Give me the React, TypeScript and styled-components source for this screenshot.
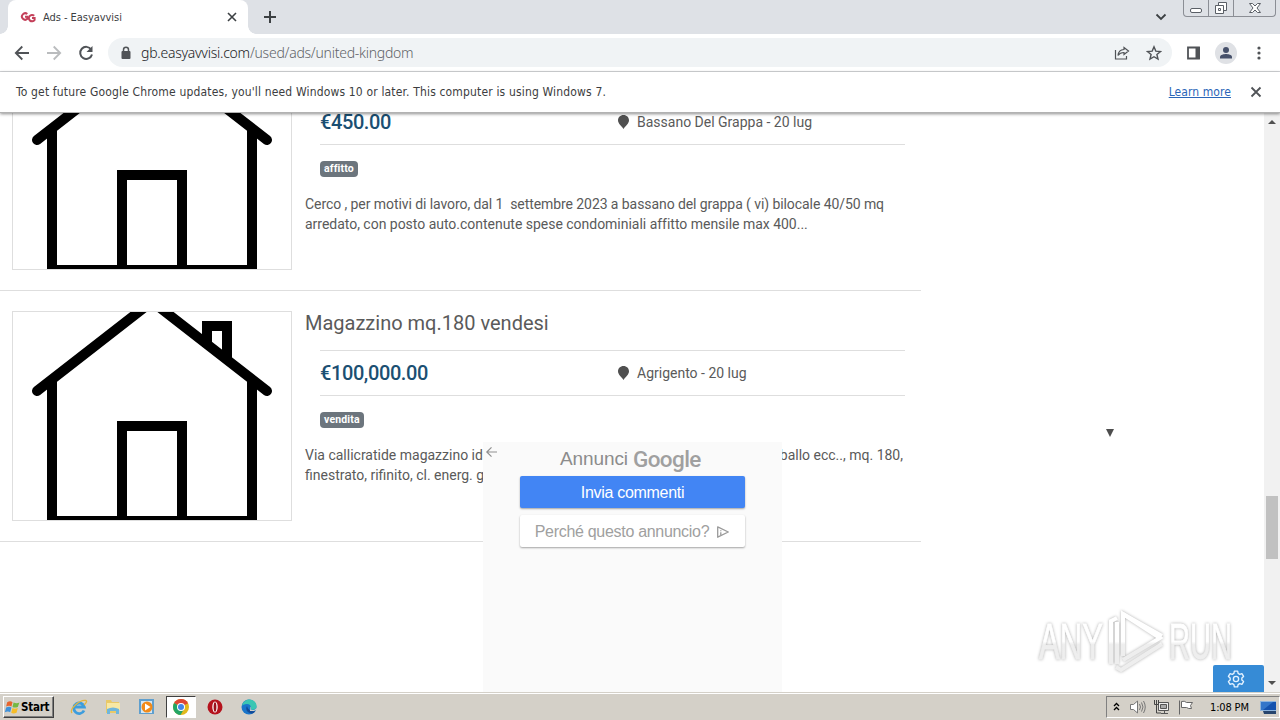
import type { ReactNode } from "react";
import styled, { createGlobalStyle } from "styled-components";

const GlobalStyle = createGlobalStyle`
  * {
    box-sizing: border-box;
  }
  body {
    margin: 0;
    overflow: hidden;
    background: #fff;
  }
  svg {
    display: block;
    flex: none;
  }
`;

const Screen = styled.div`
  width: 1280px;
  height: 720px;
  display: flex;
  flex-direction: column;
  overflow: hidden;
  font-family: "DejaVu Sans Condensed", "DejaVu Sans", sans-serif;
  font-stretch: condensed;
`;

/* Browser chrome */

const TabStrip = styled.div`
  height: 34px;
  flex: none;
  display: flex;
  align-items: flex-start;
  padding-left: 8px;
  background: #dee1e6;
`;

const Tab = styled.div`
  position: relative;
  width: 240px;
  height: 34px;
  display: flex;
  align-items: center;
  padding: 0 10px 0 12px;
  background: #fff;
  border-radius: 8px 8px 0 0;
  &::before,
  &::after {
    content: "";
    position: absolute;
    bottom: 0;
    width: 8px;
    height: 8px;
  }
  &::before {
    left: -8px;
    background: radial-gradient(circle at 0 0, #dee1e6 7.5px, #fff 8px);
  }
  &::after {
    right: -8px;
    background: radial-gradient(circle at 100% 0, #dee1e6 7.5px, #fff 8px);
  }
`;

const TabTitle = styled.span`
  flex: 1;
  margin-left: 7px;
  font-size: 11px;
  letter-spacing: -0.05px;
  color: #3c4043;
`;

const NewTab = styled.div`
  margin: 11px 0 0 16px;
`;

const TabSearch = styled.div`
  margin: 13px 16px 0 auto;
`;

const WindowButtons = styled.div`
  display: flex;
  width: 93px;
  height: 17px;
  margin-right: 4px;
  border: 1px solid #8b8e95;
  border-top: 0;
  border-radius: 0 0 4px 4px;
`;

const WindowButton = styled.div<{ $width: number }>`
  width: ${({ $width }) => $width}px;
  display: flex;
  justify-content: center;
  border-right: 1px solid #8b8e95;
  &:last-child {
    border-right: 0;
  }
`;

const Toolbar = styled.div`
  height: 38px;
  flex: none;
  display: flex;
  align-items: center;
  padding: 0 13px 0 14px;
  background: #fff;
  border-bottom: 1px solid #d5d7da;
`;

const NavIcons = styled.div`
  display: flex;
  gap: 16px;
  width: 94px;
`;

const Omnibox = styled.div`
  width: 1064px;
  height: 29px;
  display: flex;
  align-items: center;
  padding: 0 10px 0 12px;
  border-radius: 15px;
  background: #f0f3f5;
`;

const Url = styled.div`
  flex: 1;
  margin-left: 9px;
  font-family: "Noto Sans", sans-serif;
  font-size: 14px;
  font-weight: 300;
  letter-spacing: -0.25px;
  color: #5f6368;
  white-space: nowrap;
`;

const Host = styled.span`
  color: #202124;
`;

const OmniboxIcons = styled.div`
  display: flex;
  gap: 16px;
`;

const ToolbarActions = styled.div`
  display: flex;
  align-items: center;
  gap: 14px;
  margin-left: 14px;
`;

const Avatar = styled.div`
  width: 22px;
  height: 22px;
  display: grid;
  place-items: center;
  border-radius: 50%;
  background: #dfe1e5;
`;

const InfoBar = styled.div`
  position: relative;
  z-index: 1;
  height: 41px;
  flex: none;
  display: flex;
  align-items: center;
  padding: 0 18px 1px 16px;
  background: #fff;
  border-bottom: 1px solid #b2b2b2;
  box-shadow: 0 1px 3px rgba(0, 0, 0, 0.45);
  font-size: 12px;
  color: #3c3d40;
`;

const InfoText = styled.span`
  flex: 1;
  letter-spacing: 0.16px;
  white-space: nowrap;
`;

const InfoLink = styled.span`
  margin-right: 19px;
  color: #2a65b8;
  text-decoration: underline;
  letter-spacing: 0.08px;
`;

/* Page */

const Viewport = styled.div`
  flex: 1;
  min-height: 0;
  display: flex;
`;

const Page = styled.main`
  position: relative;
  width: 1264px;
  overflow: hidden;
  font-family: Roboto, sans-serif;
  font-stretch: normal;
  color: #5a5a5a;
`;

const AdList = styled.div`
  width: 921px;
  margin-top: -73px;
`;

const AdRow = styled.article`
  height: 251px;
  display: flex;
  gap: 13px;
  padding: 20px 0 20px 12px;
  border-bottom: 1px solid #dedede;
`;

const Thumb = styled.div`
  width: 280px;
  height: 210px;
  border: 1px solid #dedede;
  overflow: hidden;
`;

const AdInfo = styled.div`
  flex: 1;
  min-width: 0;
`;

const AdTitle = styled.h2`
  height: 39px;
  margin: 0;
  font-size: 20px;
  font-weight: 400;
  line-height: 24px;
`;

const AdMeta = styled.div`
  display: grid;
  grid-template-columns: 297px 1fr;
  align-items: center;
  height: 46px;
  margin: 0 16px 0 15px;
  border-top: 1px solid #dedede;
  border-bottom: 1px solid #dedede;
`;

const Price = styled.span`
  font-size: 20px;
  font-weight: 500;
  letter-spacing: -0.4px;
  color: #1b4f72;
`;

const Place = styled.span`
  display: flex;
  align-items: center;
  gap: 7px;
  font-size: 14px;
`;

const Tag = styled.span`
  display: block;
  width: fit-content;
  height: 16px;
  margin: 16px 0 17px 15px;
  padding: 0 4px;
  border-radius: 4px;
  background: #6c757d;
  color: #fff;
  font-size: 10.5px;
  font-weight: 700;
  line-height: 16px;
  letter-spacing: 0.14px;
`;

const AdText = styled.p`
  margin: 0;
  font-size: 14px;
  line-height: 20px;
  white-space: pre;
`;

const TextLine = styled.span<{ $spacing?: number }>`
  display: flex;
  justify-content: space-between;
  padding-right: 18px;
  letter-spacing: ${({ $spacing = 0 }) => $spacing}px;
`;

const Banner = styled.aside`
  position: absolute;
  left: 483px;
  top: 329px;
  width: 299px;
  height: 250px;
  display: flex;
  flex-direction: column;
  align-items: center;
  background: #fafafa;
  font-family: "Liberation Sans", Arial, sans-serif;
`;

const BannerBack = styled.div`
  position: absolute;
  left: 2px;
  top: 4px;
`;

const BannerHead = styled.div`
  width: 145px;
  height: 34px;
  display: flex;
  align-items: center;
  gap: 5px;
  font-size: 19px;
  letter-spacing: -0.1px;
  color: #8c8c8c;
  white-space: nowrap;
`;

const GoogleWord = styled.span`
  font-family: Roboto, sans-serif;
  font-size: 22.5px;
  font-weight: 500;
  letter-spacing: -0.6px;
  line-height: 30px;
  color: #a0a0a0;
`;

const BannerButton = styled.div<{ $primary?: boolean }>`
  width: 225px;
  height: 32px;
  display: flex;
  align-items: center;
  justify-content: center;
  gap: 7px;
  margin-bottom: 7px;
  padding-top: 1px;
  border-radius: 2px;
  background: ${({ $primary }) => ($primary ? "#4285f4" : "#fff")};
  color: ${({ $primary }) => ($primary ? "#fff" : "#a0a0a0")};
  box-shadow: 0 1px 2px rgba(0, 0, 0, 0.35);
  font-size: 16px;
  letter-spacing: -0.3px;
`;

const Caret = styled.div`
  position: absolute;
  left: 1106px;
  top: 316px;
  border: solid transparent;
  border-width: 8px 4.5px 0;
  border-top-color: #4d4d4d;
`;

const Watermark = styled.div`
  position: absolute;
  left: 1030px;
  top: 490px;
  filter: drop-shadow(0 0 1.5px rgba(0, 0, 0, 0.32));
`;

const SettingsTab = styled.div`
  position: absolute;
  left: 1213px;
  bottom: 0;
  width: 51px;
  height: 27px;
  display: grid;
  place-items: center;
  padding-right: 5px;
  background: #368bd6;
  border-radius: 2px 2px 0 0;
`;

const ScrollTrack = styled.div`
  width: 16px;
  display: flex;
  flex-direction: column;
  align-items: center;
  padding: 7px 0;
  background: #f1f1f1;
`;

const ScrollThumb = styled.div`
  width: 12px;
  height: 63px;
  margin: 372px 0 auto;
  background: #c1c1c1;
`;

const ScrollArrow = styled.div<{ $up?: boolean }>`
  border: solid transparent;
  border-width: ${({ $up }) => ($up ? "0 4px 4px" : "4px 4px 0")};
  border-bottom-color: ${({ $up }) => ($up ? "#505050" : "transparent")};
  border-top-color: ${({ $up }) => ($up ? "transparent" : "#505050")};
`;

/* Taskbar */

const Taskbar = styled.footer`
  position: relative;
  z-index: 1;
  height: 28px;
  flex: none;
  display: flex;
  align-items: center;
  padding: 1px 0 0 3px;
  background: #d4d0c8;
  border-top: 1px solid #d4d0c8;
  box-shadow: inset 0 1px #fff;
`;

const StartButton = styled.div`
  width: 51px;
  height: 22px;
  display: flex;
  align-items: center;
  border: 1px solid;
  border-color: #fff #404040 #404040 #fff;
  box-shadow: inset -1px -1px #808080;
  font-size: 11.5px;
  font-weight: 700;
  letter-spacing: -0.25px;
`;

const QuickLaunch = styled.div`
  display: flex;
  gap: 4px;
  margin-left: 10px;
`;

const LaunchItem = styled.div<{ $active?: boolean }>`
  width: 30px;
  height: 22px;
  display: grid;
  place-items: center;
  border: 1px solid;
  border-color: ${({ $active }) =>
    $active ? "#404040 #fff #fff #404040" : "transparent"};
  background: ${({ $active }) => ($active ? "#fff" : "transparent")};
`;

const Tray = styled.div`
  width: 174px;
  height: 22px;
  display: flex;
  align-items: center;
  margin-left: auto;
  padding-left: 6px;
  border: 1px solid;
  border-color: #808080 #fff #fff #808080;
`;

const TrayIcon = styled.div<{ $gap: number }>`
  margin-right: ${({ $gap }) => $gap}px;
`;

const Clock = styled.span`
  width: 49px;
  font-size: 11px;
  letter-spacing: -0.15px;
  color: #000;
  white-space: nowrap;
`;

interface IconProps {
  w: number;
  h?: number;
  box?: string;
  color?: string;
  stroke?: number;
  children: ReactNode;
}

function Icon({ w, h = w, box, color = "#505357", stroke = 1.5, children }: IconProps) {
  return (
    <svg
      width={w}
      height={h}
      viewBox={box ?? `0 0 ${w} ${h}`}
      fill="none"
      stroke={color}
      strokeWidth={stroke}
    >
      {children}
    </svg>
  );
}

function House() {
  return (
    <Icon w={278} h={208} box="13 312 278 208" color="#000" stroke={10}>
      <path d="M37 391 152 301.5 267 391" strokeLinecap="round" />
      <path d="M52 380V521H252V380M122 521V426H182V521M207 347V326H227V360" />
    </Icon>
  );
}

function Pin() {
  return (
    <Icon w={13} h={16} stroke={0}>
      <path d="M6.5 1C3.3 1 1 3.3 1 6.3 1 9.7 4.5 12 6.5 15 8.5 12 12 9.7 12 6.3 12 3.3 9.7 1 6.5 1Z" fill="#505050" />
    </Icon>
  );
}

interface AdProps {
  title: string;
  price: string;
  place: string;
  tag: string;
  children: ReactNode;
}

function Ad({ title, price, place, tag, children }: AdProps) {
  return (
    <AdRow>
      <Thumb>
        <House />
      </Thumb>
      <AdInfo>
        <AdTitle>{title}</AdTitle>
        <AdMeta>
          <Price>{price}</Price>
          <Place>
            <Pin />
            {place}
          </Place>
        </AdMeta>
        <Tag>{tag}</Tag>
        <AdText>{children}</AdText>
      </AdInfo>
    </AdRow>
  );
}

function BrowserTop() {
  return (
    <>
      <TabStrip>
        <Tab>
          <Icon w={16} color="#c4405a" stroke={2}>
            <path d="M7.3 5.1A3.2 3.2 0 1 0 7.4 9.8V7.7H5" />
            <path d="M14.2 6.8A3.2 3.2 0 1 0 14.6 11V9H12" />
          </Icon>
          <TabTitle>Ads - Easyavvisi</TabTitle>
          <Icon w={12} color="#3c4043" stroke={1.6}>
            <path d="m2 2 8 8M10 2 2 10" />
          </Icon>
        </Tab>
        <NewTab>
          <Icon w={12} color="#3c4043" stroke={2}>
            <path d="M6 0v12M0 6h12" />
          </Icon>
        </NewTab>
        <TabSearch>
          <Icon w={12} h={8} color="#3c4043" stroke={1.8}>
            <path d="m1.5 1.5 4.5 4.5 4.5-4.5" />
          </Icon>
        </TabSearch>
        <WindowButtons>
          <WindowButton $width={25}>
            <Icon w={13} h={16} color="#5a5f66" stroke={1}>
              <rect x="0.5" y="8.5" width="11" height="4" rx="1.5" fill="#fff" />
            </Icon>
          </WindowButton>
          <WindowButton $width={25}>
            <Icon w={14} h={16} color="#5a5f66" stroke={1}>
              <path d="M4.5 2.5h8v8h-8z" fill="#fff" />
              <path d="M1.5 5.5h8v8h-8z" fill="#fff" />
              <path d="M4.5 8.5h2v2h-2z" />
            </Icon>
          </WindowButton>
          <WindowButton $width={41}>
            <Icon w={14} h={16} color="#5a5f66" stroke={1}>
              <path d="M1.5 3.5h3L7 6l2.5-2.5h3L9 8l3.5 4.5h-3L7 10l-2.5 2.5h-3L5 8z" fill="#fff" />
            </Icon>
          </WindowButton>
        </WindowButtons>
      </TabStrip>
      <Toolbar>
        <NavIcons>
          <Icon w={16} stroke={1.8}>
            <path d="M15 8H2M8.3 1.5 1.8 8l6.5 6.5" />
          </Icon>
          <Icon w={16} color="#babcbe" stroke={1.8}>
            <path d="M1 8h13M7.7 1.5 14.2 8l-6.5 6.5" />
          </Icon>
          <Icon w={16} stroke={2}>
            <path d="M13.2 4.5A6 6 0 1 0 14 9.5" />
            <path d="M14.5 1v6h-6z" fill="#505357" stroke="none" />
          </Icon>
        </NavIcons>
        <Omnibox>
          <Icon w={12} h={14}>
            <rect x="1.5" y="5" width="9" height="8" rx="1" fill="#505357" stroke="none" />
            <path d="M3.5 6V3.8a2.5 2.5 0 0 1 5 0V6" />
          </Icon>
          <Url>
            <Host>gb.easyavvisi.com</Host>/used/ads/united-kingdom
          </Url>
          <OmniboxIcons>
            <Icon w={16} stroke={1.2}>
              <path d="M1.5 5v9h11v-3" />
              <path d="M10 2.5 14.5 6 10 9.5v-2C7 7.5 5.3 8.5 4 10.5 4.3 7 6.5 4.7 10 4.5z" />
            </Icon>
            <Icon w={16} stroke={1.4}>
              <path d="m8 1.8 1.8 4.3 4.7.4-3.6 3 1.1 4.6L8 11.7l-4 2.4 1.1-4.6-3.6-3 4.7-.4z" />
            </Icon>
          </OmniboxIcons>
        </Omnibox>
        <ToolbarActions>
          <Icon w={15} h={14}>
            <path d="M2 1.5h11v11H2z" stroke="#505357" strokeWidth="1.8" />
            <path d="M9.5 1H14v12H9.5z" fill="#505357" stroke="none" />
          </Icon>
          <Avatar>
            <Icon w={14} color="none">
              <circle cx="7" cy="4" r="3" fill="#46506a" />
              <path d="M1 12.5V11c0-2.2 4-3 6-3s6 .8 6 3v1.5z" fill="#46506a" />
            </Icon>
          </Avatar>
          <Icon w={16} color="none">
            <g fill="#505357">
              <circle cx="8" cy="3" r="1.6" />
              <circle cx="8" cy="8" r="1.6" />
              <circle cx="8" cy="13" r="1.6" />
            </g>
          </Icon>
        </ToolbarActions>
      </Toolbar>
      <InfoBar>
        <InfoText>
          To get future Google Chrome updates, you'll need Windows 10 or later. This computer is using Windows 7.
        </InfoText>
        <InfoLink>Learn more</InfoLink>
        <Icon w={12} stroke={1.8}>
          <path d="m1.5 1.5 9 9M10.5 1.5l-9 9" />
        </Icon>
      </InfoBar>
    </>
  );
}

function GoogleBanner() {
  return (
    <Banner>
      <BannerBack>
        <Icon w={13} h={12} color="#8f8f8f" stroke={1.2}>
          <path d="M12 6H2M6.5 1.3 1.8 6l4.7 4.7" />
        </Icon>
      </BannerBack>
      <BannerHead>
        Annunci <GoogleWord>Google</GoogleWord>
      </BannerHead>
      <BannerButton $primary>Invia commenti</BannerButton>
      <BannerButton>
        Perché questo annuncio?
        <Icon w={14} color="#9a9a9a" stroke={1.3}>
          <path d="M1.7 1.8 12.3 7 1.7 12.2z" strokeLinejoin="round" />
          <path d="M4.8 5.200v1M4.800 7.300V10" />
        </Icon>
      </BannerButton>
    </Banner>
  );
}

function AnyRun() {
  return (
    <Watermark>
      <svg width="210" height="80" viewBox="0 0 210 80">
        <defs>
          <linearGradient id="fade" x1="0" y1="0" x2="0" y2="80" gradientUnits="userSpaceOnUse">
            <stop offset="0.48" stopColor="#fff" />
            <stop offset="0.52" stopColor="#eee" />
          </linearGradient>
        </defs>
        <g
          fill="url(#fade)"
          stroke="url(#fade)"
          strokeWidth="0.8"
          fontFamily="'Liberation Sans Narrow', 'Liberation Sans', sans-serif"
          fontSize="50"
        >
          <text x="9" y="56" textLength="64" lengthAdjust="spacingAndGlyphs">ANY</text>
          <text x="139" y="56" textLength="63" lengthAdjust="spacingAndGlyphs">RUN</text>
        </g>
        <g fill="none" stroke="url(#fade)" strokeWidth="4">
          <path d="M93 53V11l37 24-37 22" />
          <path d="M93 11 132 33M81 61V18l6-3M87 19v42M86 64l5 3 41-26" />
        </g>
      </svg>
    </Watermark>
  );
}

function StartBar() {
  return (
    <Taskbar>
      <StartButton>
        <Icon w={17} h={17} box="0 0 16 16" color="none">
          <path d="M3 3q3-2 5 0L7 7Q5 5.5 2 7z" fill="#e8642c" />
          <path d="M9 3.3q3 1.5 5.5 0L13 7.5q-3 1-5 0z" fill="#75b843" />
          <path d="M2 8q3-1.5 5 0l-1.2 4.5q-2-1.5-5 0z" fill="#3f91d9" />
          <path d="M8 8.5q2 1.5 5 0L11.8 13q-3 1.5-5 0z" fill="#f6bd28" />
        </Icon>
        Start
      </StartButton>
      <QuickLaunch>
        <LaunchItem>
          <Icon w={18} color="#3d9ddd" stroke={2.8}>
            <path d="M14 12.5A5.3 5.3 0 1 1 14.3 9H5" />
            <path d="M2 15C-1 11 10 1 16 2.5 18 3.5 14 7 14 7" stroke="#e3b53e" strokeWidth="1.3" />
          </Icon>
        </LaunchItem>
        <LaunchItem>
          <Icon w={18} color="none">
            <path d="M2 2h5l1 2h7v11H2z" fill="#e9c968" />
            <path d="M3 5h13v7H3z" fill="#f8e8a4" />
            <path d="M3 16v-5q6-3 12 0v5h-3v-3H6v3z" fill="#6fb6dc" />
          </Icon>
        </LaunchItem>
        <LaunchItem>
          <Icon w={18} color="none">
            <path d="M1 1h15v15H1z" fill="#5f9fce" />
            <path d="M3 3h11v12H3z" fill="#d6e7f3" />
            <circle cx="9" cy="9" r="5.5" fill="#f28a18" />
            <path d="m7 5.5 5.5 3.5L7 12.5z" fill="#fff" />
          </Icon>
        </LaunchItem>
        <LaunchItem $active>
          <Icon w={16} color="none">
            <circle cx="8" cy="8" r="8" fill="#e2b91d" />
            <path d="M8 8 1.1 4A8 8 0 0 1 15 4.2z" fill="#df4634" />
            <path d="M8 8 1.1 4A8 8 0 0 0 7.5 16L11 10z" fill="#23a566" />
            <circle cx="8" cy="8" r="4" fill="#fff" />
            <circle cx="8" cy="8" r="3" fill="#4386e8" />
          </Icon>
        </LaunchItem>
        <LaunchItem>
          <Icon w={16} color="none">
            <circle cx="8" cy="8" r="7.5" fill="#b5121d" />
            <ellipse cx="8" cy="8" rx="2.7" ry="5.5" fill="#fff" />
            <ellipse cx="8" cy="8" rx="1.4" ry="4.7" fill="#9b101b" />
          </Icon>
        </LaunchItem>
        <LaunchItem>
          <Icon w={16} color="none">
            <circle cx="8" cy="8" r="7.5" fill="#1975ca" />
            <path d="M1 7C2 2 6 .5 9 .6 13 1 16 4 15.5 8c-.5 2.5-4 3.5-6 2.3C11 8 9 5 6 5 3 5 1.5 6 1 7z" fill="#3bc6b3" />
            <path d="M6 7c-2 3 0 7 5 7.5 1.5-.2 3-1.5 3.5-2.5C10 13 7 11 6 7z" fill="#134a97" />
            <path d="M9 7.5c1 1 .5 2 .5 3 2 1 5 .5 6-2v2L13 12H9z" fill="#d4d0c8" />
          </Icon>
        </LaunchItem>
      </QuickLaunch>
      <Tray>
        <TrayIcon $gap={9}>
          <Icon w={7} h={10} color="#000" stroke={1.3}>
            <path d="m1 4 2.5-2.5L6 4M1 8l2.5-2.5L6 8" />
          </Icon>
        </TrayIcon>
        <TrayIcon $gap={7}>
          <Icon w={17} h={16} color="#777" stroke={1}>
            <path d="M1.5 5.5h3L8.5 2v12l-4-3.5h-3z" fill="#fff" />
            <path d="M10.5 5q2 3 0 6M12.5 3.5q3 4.5 0 9M14.5 2q3.5 6 0 12" />
          </Icon>
        </TrayIcon>
        <TrayIcon $gap={7}>
          <Icon w={17} h={16} color="#555" stroke={1}>
            <path d="M5.5 3.5h10v8h-10z" fill="#eee" />
            <path d="M7.5 5.5h6v4h-6z" fill="#aaa" />
            <path d="M8 14.5h7M11.5 12v2" />
            <path d="M1.5 1v4.5h4V1M3.5 1v4M3.5 6v8H8" stroke="#444" />
          </Icon>
        </TrayIcon>
        <TrayIcon $gap={16}>
          <Icon w={17} h={16} color="#666" stroke={1}>
            <path d="M2.5 1.5v14" />
            <path d="M4.5 2.5q3-1 5 1h6l-2 3 1 3q-3 .5-5-1h-5z" fill="#fff" />
          </Icon>
        </TrayIcon>
        <Clock>1:08 PM</Clock>
        <Icon w={18} h={16} color="none">
          <path d="M1 2h16v10H1z" fill="#8eb4dc" />
          <path d="M2 3h15v8H2z" fill="#1452ae" />
          <path d="M2 3h12L4 11H2z" fill="#3476c9" />
          <path d="M4 12h13v3H5z" fill="#26456d" />
        </Icon>
      </Tray>
    </Taskbar>
  );
}

function App() {
  return (
    <Screen>
      <GlobalStyle />
      <BrowserTop />
      <Viewport>
        <Page>
          <AdList>
            <Ad title="" price="€450.00" place="Bassano Del Grappa - 20 lug" tag="affitto">
              <TextLine $spacing={-0.075}>
                {"Cerco , per motivi di lavoro, dal 1  settembre 2023 a bassano del grappa ( vi) bilocale 40/50 mq"}
              </TextLine>
              <TextLine $spacing={-0.02}>
                arredato, con posto auto.contenute spese condominiali affitto mensile max 400...
              </TextLine>
            </Ad>
            <Ad title="Magazzino mq.180 vendesi" price="€100,000.00" place="Agrigento - 20 lug" tag="vendita">
              <TextLine>
                <span>Via callicratide magazzino ido</span>
                <span>ballo ecc.., mq. 180,</span>
              </TextLine>
              <TextLine>finestrato, rifinito, cl. energ. g</TextLine>
            </Ad>
          </AdList>
          <GoogleBanner />
          <Caret />
          <AnyRun />
          <SettingsTab>
            <Icon w={18} box="0 0 24 24" color="#e4f2ff" stroke={1.8}>
              <circle cx="12" cy="12" r="3.5" />
              <path
                d="m9.8 1.5-.6 3-2.2 1.3-2.9-1L1.9 8.6l2.3 2v2.8l-2.3 2 2.2 3.8 2.9-1 2.2 1.3.6 3h4.400l.6-3 2.2-1.3 2.9 1 2.2-3.8-2.3-2v-2.8l2.3-2-2.2-3.8-2.9 1-2.2-1.3-.6-3z"
                strokeLinejoin="round"
              />
            </Icon>
          </SettingsTab>
        </Page>
        <ScrollTrack>
          <ScrollArrow $up />
          <ScrollThumb />
          <ScrollArrow />
        </ScrollTrack>
      </Viewport>
      <StartBar />
    </Screen>
  );
}

export default App;
